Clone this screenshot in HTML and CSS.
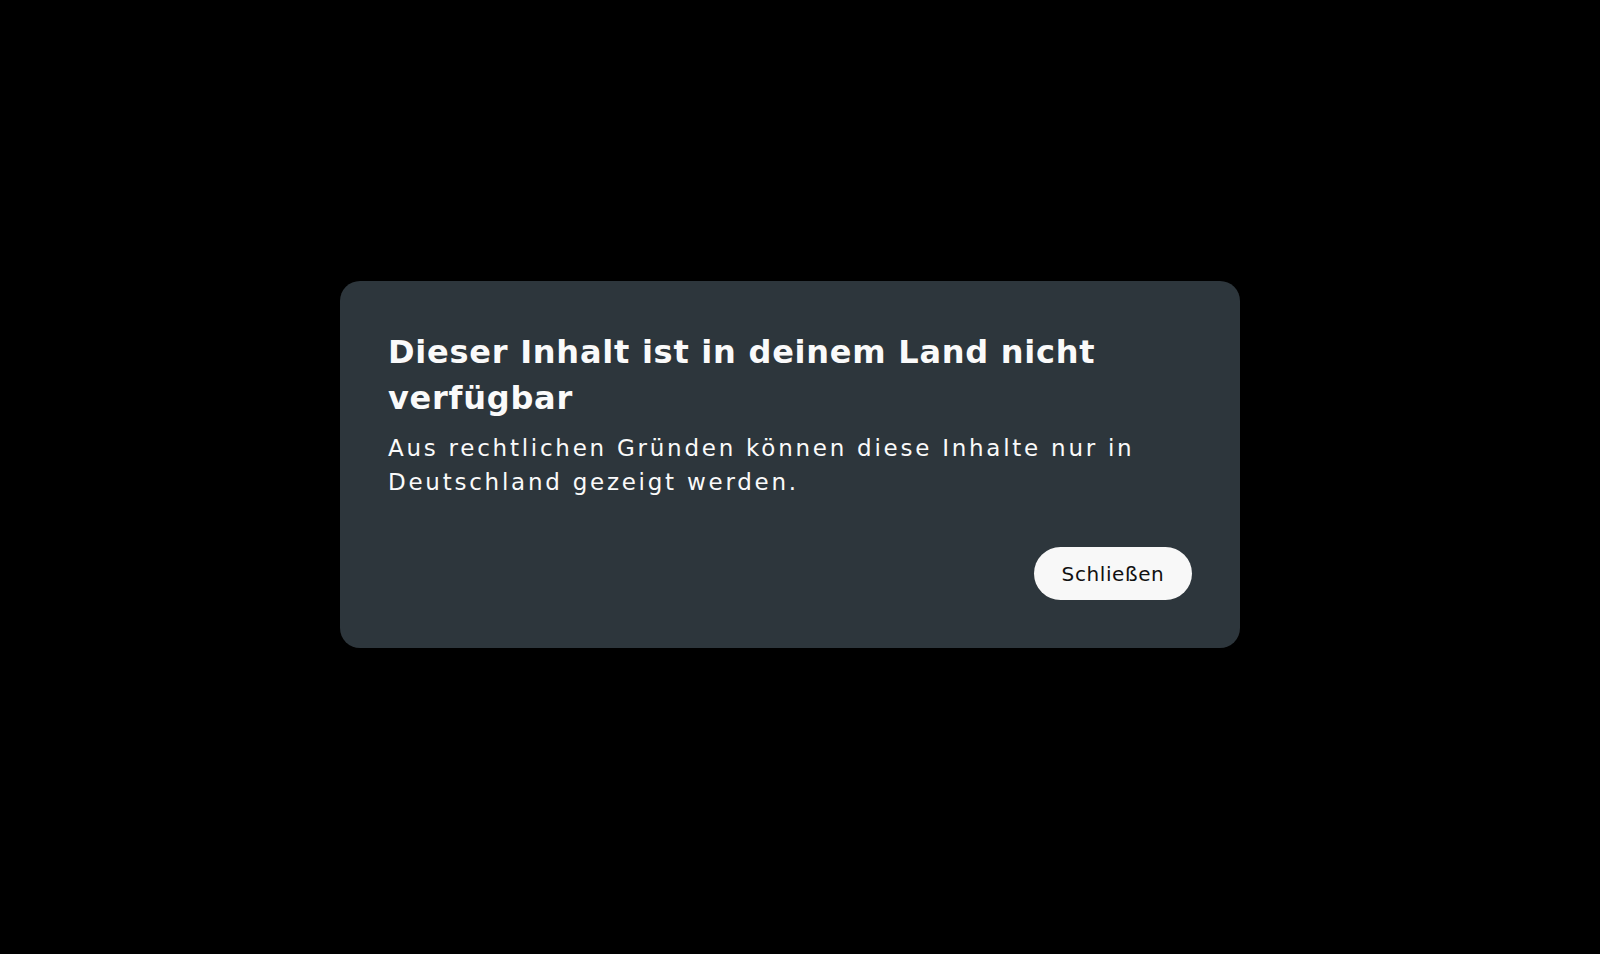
FILE: index.html
```html
<!DOCTYPE html>
<html lang="de">
<head>
    <meta charset="UTF-8">
    <meta name="viewport" content="width=device-width, initial-scale=1.0">
    <title>Nicht verfügbar</title>
    <link rel="stylesheet" href="styles.css">
</head>
<body>
    <div class="overlay">
        <div class="dialog" role="dialog" aria-labelledby="dialogTitle">
            <h2 id="dialogTitle">Dieser Inhalt ist in deinem Land nicht verfügbar</h2>
            <p>Aus rechtlichen Gründen können diese Inhalte nur in Deutschland gezeigt werden.</p>
            <div class="actions">
                <button class="close-btn">Schließen</button>
            </div>
        </div>
    </div>
</body>
</html>
```

FILE: styles.css
```css
html, body {
    margin: 0;
    height: 100%;
    background-color: #000;
}
body {
    font-family: "DejaVu Sans", "Noto Sans", sans-serif;
    color: #fafafa;
}
.overlay {
    padding: 281px 0 0 340px;
}
.dialog {
    width: 900px;
    box-sizing: border-box;
    padding: 48px;
    background-color: #2d363c;
    border-radius: 20px;
}
.dialog h2 {
    margin: 0;
    font-size: 32px;
    line-height: 46px;
    font-weight: 700;
    letter-spacing: 0.75px;
}
.dialog p {
    margin: 10px 0 0;
    font-size: 23px;
    line-height: 34px;
    letter-spacing: 2.75px;
}
.actions {
    display: flex;
    justify-content: flex-end;
    margin-top: 48px;
}
.close-btn {
    width: 158px;
    height: 53px;
    border: none;
    border-radius: 27px;
    background-color: #f8f8f8;
    color: #111;
    font-family: inherit;
    font-size: 20px;
    letter-spacing: 0.6px;
    cursor: pointer;
}
```
